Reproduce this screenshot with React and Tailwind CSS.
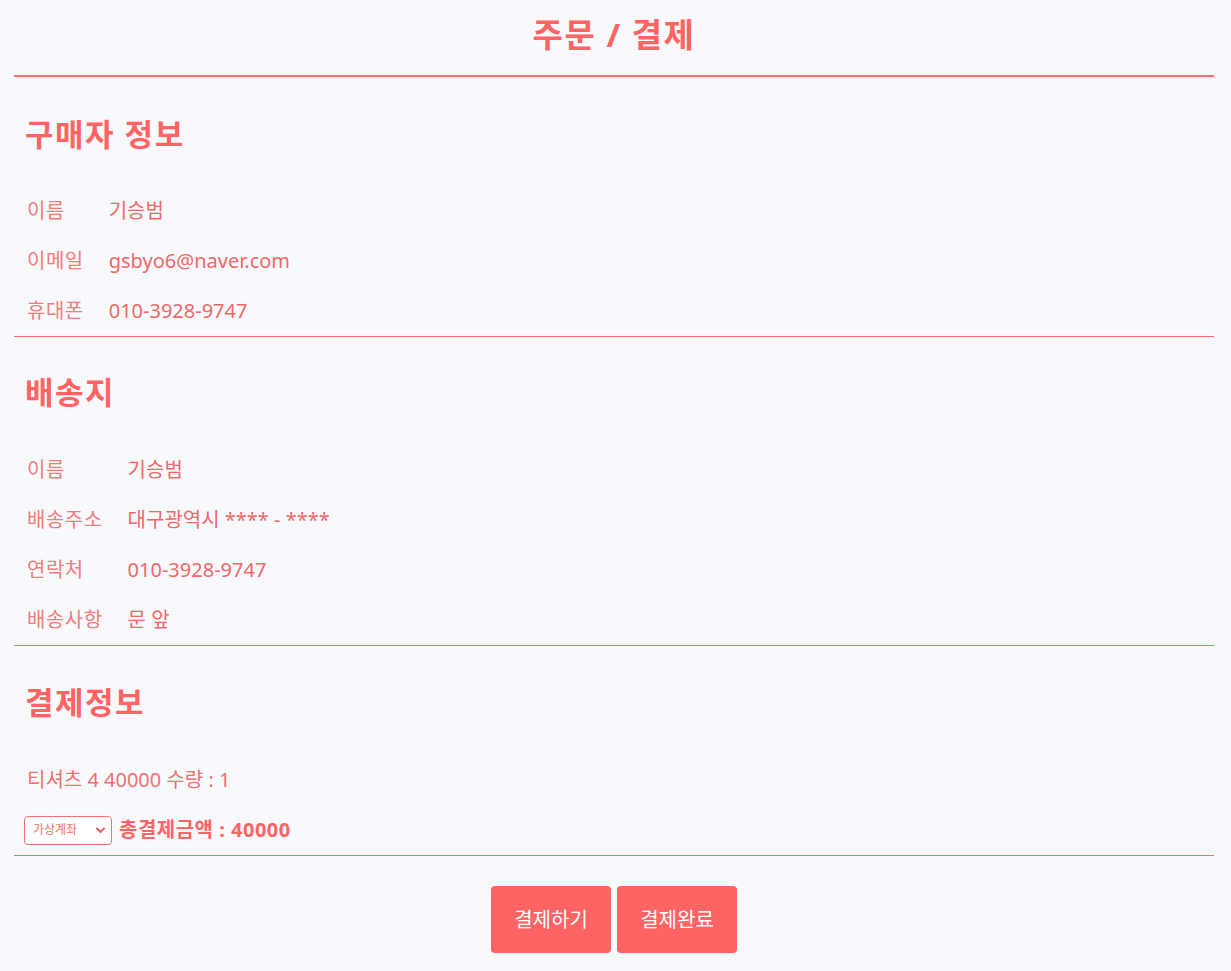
import { useState } from 'react';

const font = { fontFamily: '"Noto Sans", "Noto Sans CJK KR", sans-serif' };

const InfoRows = ({ rows }) => (
  <div className="grid grid-cols-[auto_1fr] gap-x-[25px] pl-[2px]">
    {rows.map(([label, value]) => (
      <div key={label} className="contents">
        <div className="h-[50px] flex items-center text-[20px] tracking-[0.5px] text-[#f27b7b]">{label}</div>
        <div className="h-[50px] flex items-center text-[20px] text-[#f06868]">{value}</div>
      </div>
    ))}
  </div>
);

const SectionTitle = ({ children }) => (
  <h2 className="h-[42px] flex items-center text-[31px] font-bold tracking-[1.5px] text-[#ff6464]">{children}</h2>
);

export default function App() {
  const [payMethod, setPayMethod] = useState('vbank');

  return (
    <div className="min-h-screen bg-[#f8f9fc] pl-[14px] pr-[17px]" style={font}>
      {/* Header */}
      <header className="h-[77px] flex items-center justify-center border-b-2 border-[#ff6b6b]">
        <h1 className="text-[33px] font-bold tracking-[1.5px] text-[#ff6464] -mt-[6px]">주문 / 결제</h1>
      </header>

      {/* Buyer */}
      <section className="pl-[11px] pt-[36px] border-b border-[#ff6b6b]">
        <SectionTitle>구매자 정보</SectionTitle>
        <div className="mt-[31px]">
          <InfoRows
            rows={[
              ['이름', '기승범'],
              ['이메일', 'gsbyo6@naver.com'],
              ['휴대폰', '010-3928-9747'],
            ]}
          />
        </div>
      </section>

      {/* Shipping */}
      <section className="pl-[11px] pt-[34px] border-b border-[#ff6b6b]">
        <SectionTitle>배송지</SectionTitle>
        <div className="mt-[32px]">
          <InfoRows
            rows={[
              ['이름', '기승범'],
              ['배송주소', '대구광역시 **** - ****'],
              ['연락처', '010-3928-9747'],
              ['배송사항', '문 앞'],
            ]}
          />
        </div>
      </section>

      {/* Payment */}
      <section className="pl-[11px] pt-[35px] border-b border-[#ff6b6b]">
        <SectionTitle>결제정보</SectionTitle>
        <div className="mt-[32px] pl-[2px]">
          <div className="h-[50px] flex items-center text-[20px] text-[#f27070]">티셔츠 4 40000 수량 : 1</div>
          <div className="h-[50px] flex items-center gap-[7px] -ml-[3px]">
            <div className="relative">
              <select
                value={payMethod}
                onChange={(e) => setPayMethod(e.target.value)}
                className="appearance-none h-[29px] w-[88px] pl-[8px] pr-[20px] rounded-[4px] border border-[#f07070] bg-white text-[12px] text-[#f07070] outline-none"
                style={font}
              >
                <option value="vbank">가상계좌</option>
                <option value="card">카드결제</option>
              </select>
              <svg className="absolute right-[7px] top-[11px] pointer-events-none" width="9" height="7" viewBox="0 0 9 7" fill="none">
                <path d="M1 1.5l3.5 3.5L8 1.5" stroke="#f06060" strokeWidth="2" strokeLinecap="round" strokeLinejoin="round" />
              </svg>
            </div>
            <span className="text-[20px] font-bold tracking-[0.5px] text-[#ff6464]">총결제금액 : 40000</span>
          </div>
        </div>
      </section>

      {/* Actions */}
      <div className="flex justify-center gap-[6px] pt-[30px] pb-[18px]">
        <button className="w-[120px] h-[67px] rounded-[4px] bg-[#ff6464] text-white text-[20px]">결제하기</button>
        <button className="w-[120px] h-[67px] rounded-[4px] bg-[#ff6464] text-white text-[20px]">결제완료</button>
      </div>
    </div>
  );
}
